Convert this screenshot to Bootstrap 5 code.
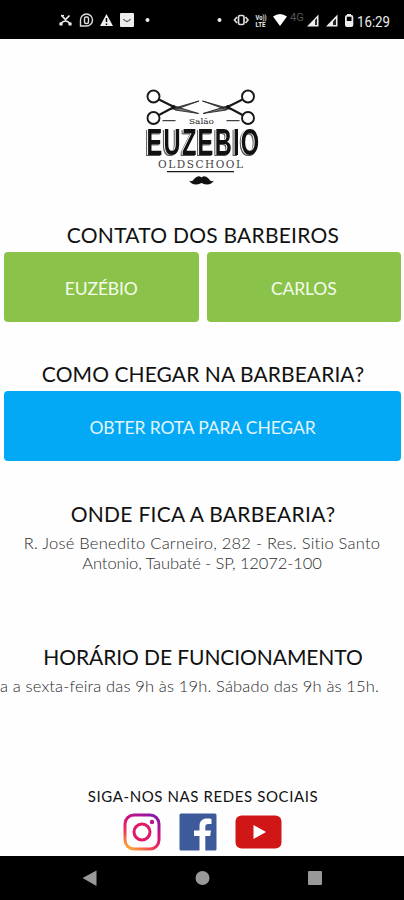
<!DOCTYPE html>
<html lang="pt-BR">
<head>
<meta charset="utf-8">
<meta name="viewport" content="width=device-width, initial-scale=1">
<title>Salão Euzebio Oldschool</title>
<link href="https://cdn.jsdelivr.net/npm/bootstrap@5.3.0/dist/css/bootstrap.min.css" rel="stylesheet">
<style>
body{font-family:Lato,"Open Sans",sans-serif;color:#111;background:#fefefe;height:900px;overflow:hidden}
.status-bar{height:39px;background:#000}
.status-bar svg,.brand-box svg,.phone-nav svg,.socials svg{display:block}
.brand-box{height:183px}
h2{font-size:21px;line-height:24px;height:30px;margin:0;padding:1px 0 0 2px;font-weight:400;white-space:nowrap}
.tiles{padding:0 3px 0 4px}
.btn-tile{height:70px;border-radius:4px;border:0;font-size:17.5px;letter-spacing:-.12px;font-weight:400;padding:4px 0 0;display:flex;align-items:center;justify-content:center}
.tile-green,.tile-green:hover{background:#8bc34a;color:#f4faec}
.tile-blue,.tile-blue:hover{background:#03a9f4;color:#e2f5fe}
.details{font-size:16.5px;line-height:20px;color:#2c2c2c;font-weight:300;white-space:nowrap;margin:0;padding-top:2px}
.contact{height:139px}.route{height:140px}.where{height:143px}.hours{height:142px}
.social-title{font-size:15px;line-height:20px;height:27px;padding-top:0;letter-spacing:.6px}
.t1{letter-spacing:.24px}.t2{letter-spacing:.08px}.t3{letter-spacing:.28px}.t4{letter-spacing:-.09px}
.line-1{letter-spacing:.25px}.line-2{letter-spacing:-.1px}
.hours .details{margin-right:25px;letter-spacing:.15px}
.logo-name{filter:drop-shadow(-.7px .6px 0 #fff) drop-shadow(-1px 1.2px 0 #555);letter-spacing:2px}
.social-icon{margin-left:18px}
.phone-nav{height:44px;background:#000}
</style>
<script src="https://cdn.jsdelivr.net/npm/bootstrap@5.3.0/dist/js/bootstrap.bundle.min.js"></script>
</head>
<body class="d-flex flex-column">
<header class="status-bar flex-shrink-0">
<svg width="404" height="39" viewBox="0 0 404 39" fill="#eee">
<g fill="none" stroke="#eee" stroke-width="1.7"><path d="M60 24.500Q65.500 17.500 71 24.500M61.500 15.500l4 4 4-4" /><path d="M59.500 24h3M68.500 24h3" stroke-width="3"/><path d="M61 15.500h3" stroke-width="1.200"/></g>
<g fill="none" stroke="#ddd" stroke-width="1.400"><path d="M80.500 26V20a6 6 0 1 1 6 6z"/><rect x="84.500" y="17" width="4" height="6.500" rx="1.500"/></g>
<path d="M106.500 14l6.500 12h-13z"/><path d="M106.500 18v4M106.500 23.500v1.500" stroke="#000" stroke-width="1.500"/>
<rect x="120" y="13" width="14" height="14" rx="1"/><path d="M123.500 19q3.500 5 7 0" fill="none" stroke="#555" stroke-width="1.300"/>
<circle cx="147.500" cy="20" r="2"/><circle cx="219.500" cy="20" r="2"/>
<g fill="none" stroke="#ddd" stroke-width="1.700"><rect x="238.500" y="15.500" width="5.500" height="9" rx="1.500"/><path d="M237 17l-2.500 3 2.500 3M245.500 17l2.500 3-2.500 3"/></g>
<g font-family="Roboto,sans-serif" font-weight="700" font-size="6.500"><text x="255.500" y="19.500" textLength="11" lengthAdjust="spacingAndGlyphs">Vo))</text><text x="255.500" y="26.500" textLength="10" lengthAdjust="spacingAndGlyphs">LTE</text></g>
<path d="M273 16.500q7-5 14 0l-7 9.500z" fill="#fff"/>
<text x="290" y="21" font-family="Roboto,sans-serif" font-size="10" fill="#555" textLength="14" lengthAdjust="spacingAndGlyphs">4G</text>
<path d="M307 26.500L318.500 14.500v12z"/><path d="M315 20v5h2v-7z" fill="#333"/>
<path d="M326 26.500L337.500 14.500v12z"/><path d="M333 21.500v3.500h3v-6.500z" fill="#222"/>
<rect x="347" y="14" width="4" height="2"/><rect x="345.900" y="15.900" width="6.500" height="10.200" rx="1" fill="none" stroke="#eee" stroke-width="1.800"/><path d="M346 21h6v5h-6z"/>
<text x="357" y="26.500" font-family="Roboto,sans-serif" font-size="14.500" textLength="33" lengthAdjust="spacingAndGlyphs">16:29</text>
</svg>
</header>
<main class="flex-grow-1 text-center">
<div class="brand-box d-flex justify-content-center">
<svg class="mt-5" width="136" height="115" viewBox="0 7 136 115" fill="none" stroke="#171717" role="img" aria-label="Salão Euzebio Oldschool">
<g id="scissors"><circle cx="19.500" cy="16.500" r="6" stroke-width="1.900"/><circle cx="19.500" cy="38" r="6" stroke-width="1.900"/><path d="M25 19.500L40 27M25 35L40 27" stroke-width="2"/><path d="M37 25L64.500 33.500L41 30zM37 29L65 21L43 29z" fill="#777" stroke-width=".8"/><circle cx="39.500" cy="27" r="1.600" fill="#111"/></g>
<use href="#scissors" transform="matrix(-1 0 0 1 133.500 0)"/>
<path d="M28.500 40.700H41.500M92.500 40.700H105.500" stroke-width="1"/>
<g stroke="none" fill="#222"><text x="55" y="43.500" font-family="DejaVu Serif,serif" font-size="8" textLength="25" lengthAdjust="spacingAndGlyphs">Salão</text>
<text class="logo-name" x="12.500" y="74.500" font-family="Liberation Sans,sans-serif" font-weight="700" font-size="37.500" fill="#111" textLength="114" lengthAdjust="spacingAndGlyphs">EUZEBIO</text>
<text x="24" y="88" font-family="DejaVu Serif,serif" font-size="10.500" fill="#444" textLength="85">OLDSCHOOL</text></g>
<path d="M33 91.700H100" stroke-width="1.300"/>
<path d="M55 100.500q3 2 5-1.500 4-4.500 7.500-1.500 3.500-3 7.500 1.500 2 3.500 5 1.500-4 6.500-12.500 2.500-8.500 4-12.500-2.500z" fill="#111" stroke="none"/>
</svg>
</div>
<section class="contact"><h2 class="t1">CONTATO DOS BARBEIROS</h2>
<div class="row g-0 tiles"><div class="col pe-1"><a class="btn btn-tile tile-green">EUZÉBIO</a></div><div class="col ps-1"><a class="btn btn-tile tile-green">CARLOS</a></div></div></section>
<section class="route"><h2 class="t2">COMO CHEGAR NA BARBEARIA?</h2><div class="tiles"><a class="btn btn-tile tile-blue">OBTER ROTA PARA CHEGAR</a></div></section>
<section class="where"><h2 class="t3">ONDE FICA A BARBEARIA?</h2><p class="details"><span class="line-1">R. José Benedito Carneiro, 282 - Res. Sitio Santo</span><br><span class="line-2">Antonio, Taubaté - SP, 12072-100</span></p></section>
<section class="hours"><h2 class="t4">HORÁRIO DE FUNCIONAMENTO</h2><p class="details d-flex justify-content-end">a a sexta-feira das 9h às 19h. Sábado das 9h às 15h.</p></section>
<section><h2 class="social-title">SIGA-NOS NAS REDES SOCIAIS</h2>
<div class="socials d-flex justify-content-center align-items-center">
<svg width="38" height="38" viewBox="0 0 38 38" fill="none"><defs><linearGradient id="ig" x1=".2" y1="1" x2=".8" y2="0"><stop stop-color="#f9a13a"/><stop offset=".3" stop-color="#ee3550"/><stop offset=".6" stop-color="#d5127b"/><stop offset="1" stop-color="#8a17a8"/></linearGradient></defs><rect x="2" y="2" width="34" height="34" rx="9" stroke="url(#ig)" stroke-width="3"/><circle cx="19" cy="19" r="8" stroke="#e01868" stroke-width="3"/><circle cx="29" cy="9" r="2.200" fill="#b51590"/></svg>
<svg class="social-icon" width="38" height="38" viewBox="0 0 38 38"><rect x=".500" y=".500" width="37" height="37" rx="1.500" fill="#3d5a9a"/><path d="M20.500 38V23H15v-5.500h5.500v-4.500c0-5 3-7.500 7.500-7.500 2 0 3.500.2 4.500.4v5h-3c-2.500 0-3.200 1.200-3.200 3v3.600H32L31.200 23h-4.900v15z" fill="#fff"/></svg>
<svg class="social-icon" width="47" height="34" viewBox="0 0 47 34"><rect x=".5" y=".5" width="46" height="33" rx="6" fill="#d01616"/><path d="M18.500 10v14l12.500-7z" fill="#fff"/></svg>
</div></section>
</main>
<footer class="phone-nav flex-shrink-0"><svg width="404" height="44" viewBox="0 0 404 44" fill="#999"><path d="M82.500 22L96.500 14.500v15.500z"/><circle cx="202.500" cy="22" r="7"/><rect x="308" y="15" width="14" height="14" rx="1"/></svg></footer>
</body>
</html>
